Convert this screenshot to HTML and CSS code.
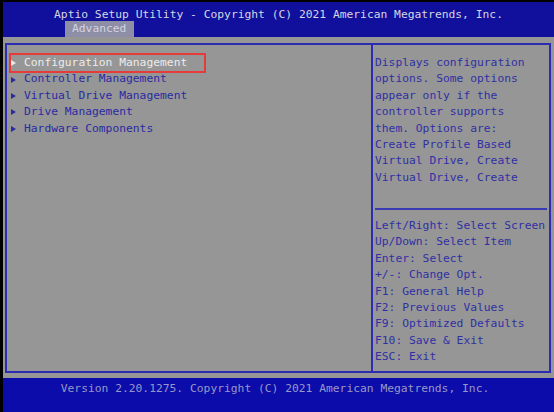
FILE: index.html
```html
<!DOCTYPE html>
<html lang="en">
<head>
  <meta charset="UTF-8">
  <meta name="viewport" content="width=device-width, initial-scale=1.0">
  <title>Aptio Setup Utility</title>
  <link rel="stylesheet" href="styles.css">
</head>
<body>
  <div class="screen">
    <div class="header">
      <div class="title">Aptio Setup Utility - Copyright (C) 2021 American Megatrends, Inc.</div>
      <div class="tabs">
        <span class="tab active">Advanced</span>
      </div>
    </div>

    <div class="main">
      <div class="frame">
        <div class="menu">
          <div class="item selected"><span class="arrow"></span>Configuration Management</div>
          <div class="item"><span class="arrow"></span>Controller Management</div>
          <div class="item"><span class="arrow"></span>Virtual Drive Management</div>
          <div class="item"><span class="arrow"></span>Drive Management</div>
          <div class="item"><span class="arrow"></span>Hardware Components</div>
        </div>

        <div class="side">
          <div class="help">
            <div>Displays configuration</div>
            <div>options. Some options</div>
            <div>appear only if the</div>
            <div>controller supports</div>
            <div>them. Options are:</div>
            <div>Create Profile Based</div>
            <div>Virtual Drive, Create</div>
            <div>Virtual Drive, Create</div>
          </div>
          <div class="keys">
            <div>Left/Right: Select Screen</div>
            <div>Up/Down: Select Item</div>
            <div>Enter: Select</div>
            <div>+/-: Change Opt.</div>
            <div>F1: General Help</div>
            <div>F2: Previous Values</div>
            <div>F9: Optimized Defaults</div>
            <div>F10: Save &amp; Exit</div>
            <div>ESC: Exit</div>
          </div>
        </div>
      </div>
    </div>

    <div class="footer">Version 2.20.1275. Copyright (C) 2021 American Megatrends, Inc.</div>
  </div>
</body>
</html>
```

FILE: styles.css
```css
html, body {
  margin: 0;
  height: 100%;
}
body {
  background-color: #000;
  padding: 2px 0 0 3px;
  box-sizing: border-box;
  font-family: 'DejaVu Sans Mono', 'Liberation Mono', monospace;
  font-size: 11.3px;
  line-height: 16.4px;
}
.screen {
  display: flex;
  flex-direction: column;
  height: 410px;
  width: 551px;
}

/* top bar */
.header {
  background-color: #10109c;
  height: 35px;
  box-sizing: border-box;
  padding-top: 5px;
}
.title {
  color: #d6d6e2;
  text-align: center;
  height: 14px;
}
.tabs {
  display: flex;
  padding-left: 62px;
}
.tab {
  height: 16px;
  padding: 0 7px;
  width: 55px;
}
.tab.active {
  background-color: #8e8ea6;
  color: #d4d4e2;
}

/* body area */
.main {
  flex: 1;
  background-color: #969696;
  padding: 6px 3px 5px 2px;
  display: flex;
}
.frame {
  flex: 1;
  display: flex;
  border: 2px solid #2c2cb0;
}
.menu {
  width: 364px;
  padding: 10px 0 0 4px;
  box-sizing: border-box;
}
.item {
  display: flex;
  align-items: center;
  width: fit-content;
  color: #2a2aa2;
  height: 16.4px;
}
.item.selected {
  color: #ececec;
  padding-right: 17px;
  outline: 2px solid #e63b3b;
}
.arrow {
  width: 0;
  height: 0;
  border-left: 5px solid #2a2aa2;
  border-top: 3.5px solid transparent;
  border-bottom: 3.5px solid transparent;
  margin-right: 8px;
}
.item.selected .arrow {
  border-left-color: #ececec;
}

.side {
  flex: 1;
  border-left: 2px solid #2c2cb0;
  display: flex;
  flex-direction: column;
  color: #3030a4;
  white-space: nowrap;
}
.help {
  height: 165px;
  padding: 10px 0 0 0;
  border-bottom: 2px solid #3a3ab4;
  margin: 0 2px;
  box-sizing: border-box;
}
.keys {
  padding: 8px 0 0 2px;
}

/* bottom bar */
.footer {
  background-color: #0c0caa;
  height: 34px;
  box-sizing: border-box;
  padding: 3px 7px 0 0;
  color: #9898c6;
  text-align: center;
}
```
